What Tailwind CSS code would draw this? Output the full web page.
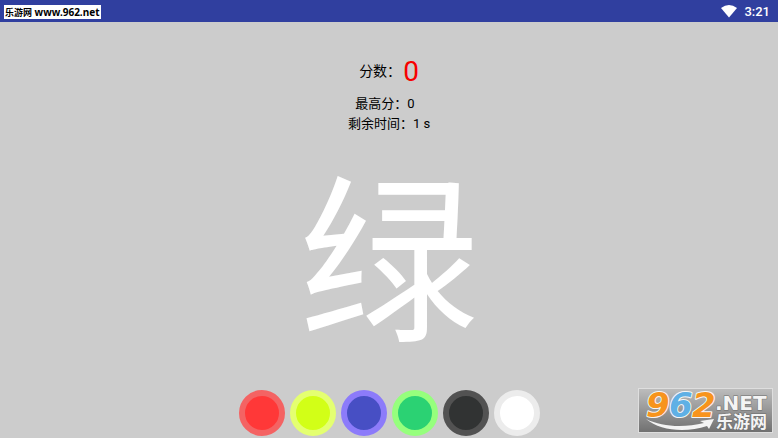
<!DOCTYPE html>
<html lang="zh-CN">

<head>
    <meta charset="UTF-8">
    <meta name="viewport" content="width=device-width, initial-scale=1.0">
    <script src="https://cdn.jsdelivr.net/npm/@tailwindcss/browser@4"></script>
    <title>绿</title>
</head>

<body class="flex min-h-screen flex-col bg-[#cccccc] font-['Roboto','Noto_Sans_CJK_SC',sans-serif] text-black">
    <header class="flex h-[22px] items-center justify-between bg-[#303f9f] pl-1 pr-2 text-white">
        <a href="#" class="mt-0.5 flex h-3.5 items-center bg-white px-px font-['Noto_Sans','Noto_Sans_CJK_SC',sans-serif] text-[10px] font-bold leading-none text-black whitespace-pre"><span class="text-[9px]">乐游网</span> www.962.net</a>
        <div class="flex items-center gap-1.5">
            <svg class="h-3.5 w-[18px]" viewBox="0 0 18 14" fill="currentColor">
                <path d="M1 4 Q9 -2.2 17 4 L9 13.4 Z" />
            </svg>
            <span class="pt-px text-[13px] font-medium leading-5">3:21</span>
        </div>
    </header>

    <main class="relative flex flex-1 flex-col items-center pt-7">
        <div class="flex items-center gap-0.5">
            <span class="text-sm leading-10">分数：</span>
            <span class="pt-0.5 text-[28px] leading-10 text-[#f80000]">0</span>
        </div>
        <p class="mt-0.5 pr-2 text-[13px] leading-5">最高分：0</p>
        <p class="text-[13px] leading-5">剩余时间：1 s</p>

        <h1 class="mt-7 text-[180px] leading-[208px] text-white">绿</h1>

        <!-- colour answers -->
        <div class="mt-auto flex gap-[5px] pb-0.5">
            <button type="button" aria-label="红" class="size-[46px] rounded-full border-6 border-[#f46363] bg-[#ff3838]"></button>
            <button type="button" aria-label="黄" class="size-[46px] rounded-full border-6 border-[#e4ff71] bg-[#d2ff17]"></button>
            <button type="button" aria-label="蓝" class="size-[46px] rounded-full border-6 border-[#8c7bfa] bg-[#474fc4]"></button>
            <button type="button" aria-label="绿" class="size-[46px] rounded-full border-6 border-[#96ff7d] bg-[#2bd273]"></button>
            <button type="button" aria-label="黑" class="size-[46px] rounded-full border-6 border-[#525252] bg-[#313333]"></button>
            <button type="button" aria-label="白" class="size-[46px] rounded-full border-6 border-[#ececec] bg-white"></button>
        </div>

        <a href="#" class="absolute bottom-[5px] right-[5px]">
            <svg class="h-[45px] w-[135px] overflow-visible" viewBox="0 0 135 45">
                <defs>
                    <linearGradient id="plate" x1="0" y1="0" x2="0" y2="1">
                        <stop offset="0" stop-color="#bdbdbd" />
                        <stop offset="1" stop-color="#707070" />
                    </linearGradient>
                </defs>
                <rect x="0.5" y="0.5" width="134" height="44" fill="url(#plate)" stroke="#dedede" />
                <path d="M8 31 C24 39 46 40 66 35 L62 33 L76 31 L71 41 L69 38 C48 45 22 43 8 31 Z" fill="#f4f4f4" />
                <g class="font-['DejaVu_Sans',sans-serif] font-bold italic" font-size="34" stroke="#f6f6f6" stroke-width="2" stroke-linejoin="round" paint-order="stroke">
                    <text x="8" y="29" fill="#f7941d">9</text>
                    <text x="31" y="29" fill="#5fb0e5">6</text>
                    <text x="54" y="29" fill="#f7941d">2</text>
                </g>
                <g fill="#f4f4f4" stroke="#6c6c6c" stroke-width="1" paint-order="stroke">
                    <text x="77" y="22" font-size="20" class="font-['DejaVu_Sans',sans-serif] font-bold">.NET</text>
                    <text x="78" y="40" font-size="17" class="font-['Noto_Sans_CJK_SC',sans-serif] font-bold">乐游网</text>
                </g>
            </svg>
        </a>
    </main>
</body>

</html>
